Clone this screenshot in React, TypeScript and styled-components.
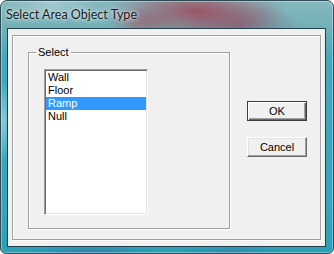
import styled, { createGlobalStyle } from "styled-components";

const GlobalStyle = createGlobalStyle`
  html, body {
    margin: 0;
    padding: 0;
    background: #ffffff;
  }
  body {
    width: 334px;
    height: 254px;
    overflow: hidden;
  }
`;

const Window = styled.div`
  box-sizing: border-box;
  width: 334px;
  height: 254px;
  display: flex;
  flex-direction: column;
  padding: 0 7px 6px 6px;
  border: 1px solid #2d4c55;
  border-radius: 7px 7px 6px 6px;
  background:
    radial-gradient(ellipse 90px 30px at 195px 10px, rgba(165, 55, 75, 0.75), transparent),
    radial-gradient(ellipse 60px 22px at 240px 24px, rgba(135, 80, 110, 0.6), transparent),
    radial-gradient(ellipse 35px 16px at 140px 22px, rgba(160, 90, 105, 0.5), transparent),
    radial-gradient(ellipse 45px 18px at 50px 2px, rgba(185, 212, 218, 0.6), transparent),
    radial-gradient(ellipse 8px 40px at 3px 120px, rgba(170, 220, 228, 0.7), transparent),
    radial-gradient(ellipse 60px 6px at 90px 251px, rgba(55, 105, 160, 0.6), transparent),
    radial-gradient(ellipse 50px 6px at 230px 251px, rgba(55, 115, 165, 0.5), transparent),
    linear-gradient(180deg, #86b8be 0px, #72b0b7 26px, #43a8bb 60px, #38a5ba 200px, #2c9eb6 254px);
  box-shadow: inset 0 0 0 1px rgba(255, 255, 255, 0.35);
  overflow: hidden;
`;

const TitleBar = styled.div`
  height: 27px;
  display: flex;
  align-items: center;
  margin-left: -1px;
  font-family: Lato, "Segoe UI", "Noto Sans", sans-serif;
  font-size: 12.5px;
  color: #1b1b1b;
  text-shadow: 0 0 6px rgba(255, 255, 255, 0.9), 0 0 3px rgba(255, 255, 255, 0.7);
  white-space: nowrap;
`;

const Client = styled.div`
  flex: 1;
  display: flex;
  border: 1px solid #233f48;
  background: #f0f0f0;
  padding: 6px 4px 6px 4px;
  font-family: "Liberation Sans", Arial, sans-serif;
  font-size: 11px;
  color: #000000;
`;

const Frame = styled.div`
  flex: 1;
  display: flex;
  align-items: flex-start;
  border: 1px solid #a0a0a0;
  box-shadow: inset 1px 1px 0 #ffffff, 1px 1px 0 #ffffff;
  padding: 10px 0 0 15px;
`;

const Group = styled.fieldset`
  box-sizing: border-box;
  width: 202px;
  height: 183px;
  margin: 0;
  padding: 10px 0 0 15px;
  border: 1px solid #a0a0a0;
  box-shadow: inset 1px 1px 0 #ffffff, 1px 1px 0 #ffffff;
  min-inline-size: 0;
`;

const Legend = styled.legend`
  margin-left: -8px;
  padding: 0 2px;
  height: 13px;
  line-height: 13px;
  background: #f0f0f0;
`;

const ListBox = styled.div`
  box-sizing: border-box;
  width: 104px;
  height: 146px;
  background: #ffffff;
  border-style: solid;
  border-width: 1px;
  border-color: #a0a0a0 #ffffff #ffffff #a0a0a0;
  box-shadow: inset 1px 1px 0 #696969, inset -1px -1px 0 #e3e3e3;
  padding: 1px;
  display: flex;
  flex-direction: column;
`;

const Item = styled.div<{ $selected?: boolean }>`
  box-sizing: border-box;
  height: 13px;
  line-height: 13px;
  padding-left: 2px;
  background: ${(p) => (p.$selected ? "#3399ff" : "transparent")};
  color: ${(p) => (p.$selected ? "#ffffff" : "#000000")};
  outline: ${(p) => (p.$selected ? "1px dotted #cc6a1f" : "none")};
  outline-offset: -1px;
`;

const ButtonColumn = styled.div`
  display: flex;
  flex-direction: column;
  gap: 16px;
  margin-left: 17px;
  padding-top: 55px;
`;

const Button = styled.button<{ $default?: boolean }>`
  box-sizing: border-box;
  width: 60px;
  height: 20px;
  padding: 0;
  margin: 0;
  font-family: "Liberation Sans", Arial, sans-serif;
  font-size: 11px;
  color: #000000;
  background: #f0f0f0;
  border-style: solid;
  border-width: 1px;
  border-color: ${(p) =>
    p.$default ? "#3c3c3c" : "#ffffff #696969 #696969 #ffffff"};
  box-shadow: ${(p) =>
    p.$default
      ? "inset 1px 1px 0 #ffffff, inset -1px -1px 0 #696969, inset -2px -2px 0 #a0a0a0"
      : "inset -1px -1px 0 #a0a0a0, inset 1px 1px 0 #e3e3e3"};
`;

const items = ["Wall", "Floor", "Ramp", "Null"];

function App() {
  return (
    <>
      <GlobalStyle />
      <Window>
        <TitleBar>Select Area Object Type</TitleBar>
        <Client>
          <Frame>
            <Group>
              <Legend>Select</Legend>
              <ListBox>
                {items.map((name) => (
                  <Item key={name} $selected={name === "Ramp"}>
                    {name}
                  </Item>
                ))}
              </ListBox>
            </Group>
            <ButtonColumn>
              <Button $default>OK</Button>
              <Button>Cancel</Button>
            </ButtonColumn>
          </Frame>
        </Client>
      </Window>
    </>
  );
}

export default App;
